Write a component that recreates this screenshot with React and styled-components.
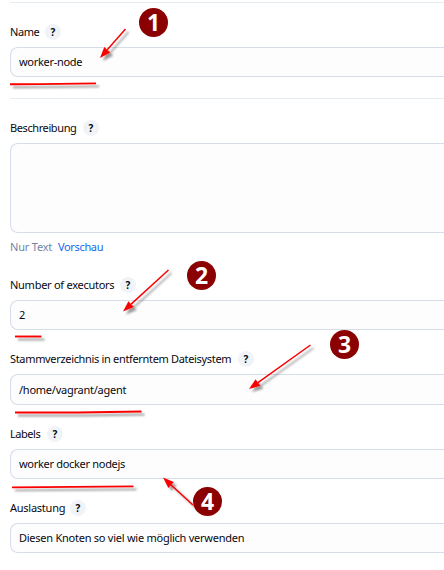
import React from "react";
import styled, { createGlobalStyle } from "styled-components";

const GlobalStyle = createGlobalStyle`
  *, *::before, *::after { box-sizing: border-box; }
  html, body { margin: 0; background: #fff; }
  body { overflow: hidden; }
`;

const Page = styled.main`
  position: relative;
  width: 444px;
  height: 570px;
  padding: 2px 0 0 10px;
  overflow: hidden;
  background: #fff;
  color: #08080f;
  font-family: "Noto Sans", "Open Sans", sans-serif;
  font-size: 11px;
  line-height: 16px;
`;

const Divider = styled.hr`
  height: 1px;
  margin: 0;
  border: 0;
  background: #e6ecf3;
`;

const Field = styled.section`
  padding-top: ${(p) => p.$top}px;
`;

const Label = styled.div`
  display: flex;
  align-items: center;
  gap: 6px;
  height: 16px;
  margin-bottom: 7px;
`;

const LabelText = styled.span`
  width: ${(p) => p.$width}px;
  letter-spacing: ${(p) => p.$spacing || 0}px;
  white-space: nowrap;
`;

const Help = styled.span`
  width: 16px;
  height: 16px;
  border-radius: 50%;
  background: #f0f4f8;
  font-size: 10px;
  font-weight: 700;
  text-align: center;
`;

const Control = styled.div`
  display: flex;
  align-items: center;
  height: ${(p) => p.$height || 30}px;
  padding: 0 8px;
  border: 1px solid #d6dcea;
  border-right: 0;
  border-radius: 8px 0 0 8px;
  background: #fdfdfd;
  letter-spacing: ${(p) => p.$spacing || 0}px;
  white-space: nowrap;
`;

const Modes = styled.div`
  display: flex;
  gap: 7px;
  height: 16px;
  margin-top: 6px;
  color: #7286a3;
  letter-spacing: -0.35px;
  white-space: nowrap;
`;

const ModeText = styled.span`
  width: 41px;
  letter-spacing: -0.2px;
`;

const PreviewLink = styled.span`
  color: #1466f0;
`;

const Annotations = styled.svg`
  position: absolute;
  inset: 0;
  pointer-events: none;
`;

const Badge = styled.span`
  position: absolute;
  left: ${(p) => p.$x}px;
  top: ${(p) => p.$y}px;
  width: 29px;
  height: 29px;
  border-radius: 50%;
  background: #8b0000;
  color: #fff;
  font: 700 23px/29px "Noto Sans", sans-serif;
  text-align: center;
`;

function FormField({ label, width, spacing, top, value, valueSpacing, height }) {
  return (
    <Field $top={top}>
      <Label>
        <LabelText $width={width} $spacing={spacing}>{label}</LabelText>
        <Help>?</Help>
      </Label>
      <Control $height={height} $spacing={valueSpacing}>{value}</Control>
    </Field>
  );
}

const arrows = [
  [125.5, 29, 100, 58],
  [168.5, 270, 123, 311.5],
  [310.5, 345, 249, 389],
  [193, 505, 163, 477.5],
];

const underlines = [
  "M10 84.3L40 84.1L96 83.4",
  "M15 336.5H41.5",
  "M15 412.5H78L141.5 411.5",
  "M12 487.4L73 486.9L133.5 486.4",
];

function Arrow({ points: [x1, y1, x2, y2] }) {
  const length = Math.hypot(x2 - x1, y2 - y1);
  const ux = (x2 - x1) / length;
  const uy = (y2 - y1) / length;
  const bx = x2 - ux * 11;
  const by = y2 - uy * 11;
  return (
    <g>
      <path d={`M${x1} ${y1}L${bx} ${by}`} strokeWidth="1.5" />
      <path
        d={`M${x2} ${y2}L${bx - uy * 4} ${by + ux * 4}L${bx + uy * 4} ${by - ux * 4}Z`}
        fill="#fa0000"
        stroke="none"
      />
    </g>
  );
}

export default function App() {
  return (
    <>
      <GlobalStyle />
      <Page>
        <Divider />
        <FormField label="Name" width={29} spacing={-0.45} top={21} value="worker-node" valueSpacing={-0.3} />
        <Field $top={21}>
          <Divider />
        </Field>
        <FormField label="Beschreibung" width={67} spacing={-0.4} top={21} height={90} />
        <Modes>
          <ModeText>Nur Text</ModeText>
          <PreviewLink>Vorschau</PreviewLink>
        </Modes>
        <FormField label="Number of executors" width={104} spacing={-0.27} top={22} value="2" />
        <FormField label="Stammverzeichnis in entferntem Dateisystem" width={222} spacing={-0.33} top={21} value="/home/vagrant/agent" valueSpacing={-0.25} height={31} />
        <FormField label="Labels" width={31} spacing={-0.45} top={21} value="worker docker nodejs" valueSpacing={-0.3} />
        <FormField label="Auslastung" width={54} spacing={-0.25} top={21} value="Diesen Knoten so viel wie möglich verwenden" valueSpacing={-0.25} />

        <Annotations width="444" height="570" fill="none" stroke="#fa0000">
          <defs>
            <filter id="shadow" filterUnits="userSpaceOnUse" x="0" y="0" width="444" height="570">
              <feDropShadow dx="3" dy="3" stdDeviation="1.1" floodColor="#000" floodOpacity="0.4" />
            </filter>
          </defs>
          <g filter="url(#shadow)">
            {arrows.map((points) => <Arrow key={points.join()} points={points} />)}
            {underlines.map((d) => <path key={d} d={d} strokeWidth="1.9" />)}
          </g>
        </Annotations>
        <Badge $x={139} $y={8}>1</Badge>
        <Badge $x={187} $y={261}>2</Badge>
        <Badge $x={330} $y={330}>3</Badge>
        <Badge $x={193} $y={487}>4</Badge>
      </Page>
    </>
  );
}
